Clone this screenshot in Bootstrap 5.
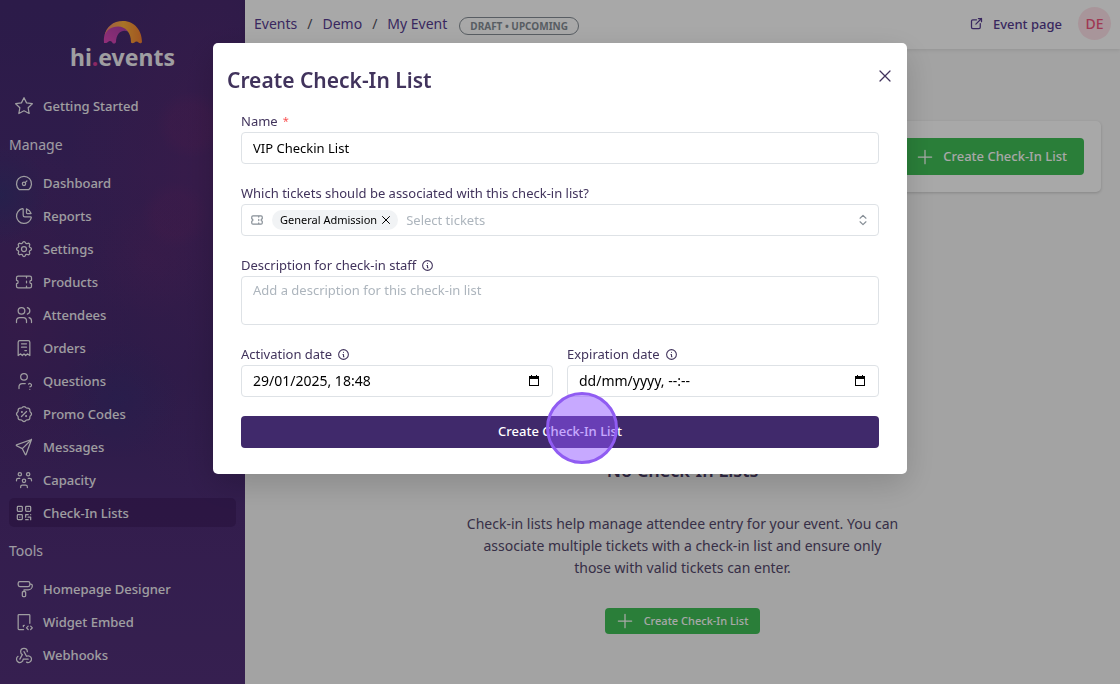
<!DOCTYPE html>
<html lang="en">
<head>
<meta charset="utf-8">
<meta name="viewport" content="width=device-width, initial-scale=1">
<title>Create Check-In List - hi.events</title>
<link href="https://cdn.jsdelivr.net/npm/bootstrap@5.3.0/dist/css/bootstrap.min.css" rel="stylesheet">
<style>
  body { font-family: "Noto Sans", "Open Sans", sans-serif; font-size: 13px; line-height: 20px; background: #f7f7f7; color: #54486c; }
  svg.ti { width: 20px; height: 20px; fill: none; stroke: currentColor; stroke-width: 1.5; stroke-linecap: round; stroke-linejoin: round; flex: none; }

  .side-panel {
    width: 245px; padding: 20px 9px 0; color: #fff;
    background:
      radial-gradient(circle at 190px 125px, rgba(130,40,110,.15) 0 20px, transparent 34px),
      radial-gradient(circle at 175px 215px, rgba(130,40,110,.13) 0 20px, transparent 34px),
      radial-gradient(circle at 150px 260px, rgba(120,40,110,.16), transparent 60px),
      radial-gradient(circle at 0 195px, rgba(35,60,120,.4), transparent 50px),
      radial-gradient(circle at 120px 400px, rgba(50,50,120,.35), transparent 60px),
      radial-gradient(ellipse at 200px 170px, rgba(110,40,110,.3), transparent 130px),
      radial-gradient(ellipse at 20px 320px, rgba(105,38,110,.3), transparent 110px),
      linear-gradient(180deg, #432a70 0%, #482b72 25%, #432a6f 55%, #4e2d76 75%, #52307a 100%);
  }
  .brand-word { font-size: 23px; line-height: 26px; font-weight: 700; opacity: .93; }
  .brand-word span { color: #e0409c; }
  .brand-block { margin-bottom: 21px; }
  .side-link { height: 29px; margin-bottom: 4px; padding: 0 5px; gap: 9px; border-radius: 5px; color: #fff; text-decoration: none; font-weight: 500; opacity: .93; }
  .side-link.active { background: rgba(50,15,75,.35); color: #fff; }
  .side-title { font-size: 14px; line-height: 20px; padding: 5px 0; margin: 9px 0 8px; color: #f1ecf7; }
  .side-title.first { margin-top: 10px; }

  .top-bar { height: 49px; padding: 0 9px 2px; background: #fff; box-shadow: 0 1px 4px rgba(0,0,0,.1); }
  .crumb-row { gap: 12px; }
  .crumbs { --bs-breadcrumb-divider-color: #55505c; font-size: 14px; }
  .crumbs a, .page-link-out { color: #573c91; text-decoration: none; }
  .page-link-out { font-weight: 500; gap: 9px; }
  .page-link-out svg.ti { width: 15px; height: 15px; stroke-width: 2; }
  .crumbs .breadcrumb-item + .breadcrumb-item { padding-left: 10px; }
  .crumbs .breadcrumb-item + .breadcrumb-item::before { padding-right: 10px; }
  .status-pill { font-size: 10px; line-height: 16px; font-weight: 700; padding: 0 10px; color: #868e96; border: 1px solid #868e96; }
  .user-dot { width: 33px; height: 33px; font-size: 14px; font-weight: 500; color: #f2557f; background: #ffe3ea; border: 0; }

  .work-area { padding: 72px 19px 0; }
  .tool-card { padding: 17px; background: #fff; border-radius: 5px; box-shadow: 0 1px 3px rgba(0,0,0,.18); }
  .btn-green { --bs-btn-color: #fff; --bs-btn-bg: #40c057; --bs-btn-hover-bg: #37b24d; --bs-btn-hover-color: #fff; --bs-btn-border-width: 0; --bs-btn-border-radius: 4px; --bs-btn-font-weight: 500; }
  .btn-lg-create { height: 37px; padding: 0 17px 0 12px; gap: 8px; font-size: 13px; }
  .btn-sm-create { height: 26px; padding: 0 12px 0 10px; gap: 9px; font-size: 11px; }
  .empty-state { padding-top: 265px; font-size: 14px; line-height: 22px; }
  .empty-state h2 { font-size: 18px; line-height: 26px; font-weight: 600; margin-bottom: 30px; color: #4a3d66; }
  .empty-state p { max-width: 436px; margin-bottom: 29px; }

  .modal-backdrop.show { --bs-backdrop-opacity: .34; }
  .create-dialog { max-width: 694px; margin: 43px auto; }
  .create-dialog .modal-content { border: 0; border-radius: 5px; padding: 22px 14px 26px; box-shadow: 0 10px 32px rgba(0,0,0,.16); color: #41335c; }
  .create-dialog .modal-title { font-size: 21px; line-height: 30px; font-weight: 600; }
  .close-x { width: 22px; height: 22px; color: #3f4550; margin-right: -3px; }
  .fields { padding: 16px 14px 0; }
  .field-block { margin-bottom: 19px; }
  .field-block label { display: flex; align-items: center; gap: 5px; margin-bottom: 1px; line-height: 20px; }
  .field-block label svg.ti { width: 13px; height: 13px; stroke-width: 2; }
  .star-req { color: #fa5252; font-size: 11px; }
  .box { width: 100%; min-height: 32px; padding: 0 11px; font-size: 13px; line-height: 20px; color: #000; background: #fff; border: 1px solid #dee2e6; border-radius: 4px; box-shadow: none; }
  .box::placeholder { color: #adb5bd; opacity: 1; }
  textarea.box { display: block; height: 49px; padding: 3px 11px; resize: none; }
  .tick-svg { color: #868e96; }
  .pick-box { padding: 0 8px; }
  .pick-box svg.tick-svg { width: 14px; height: 14px; stroke-width: 2; }
  .ticket-tag { height: 20px; padding: 0 6px 0 8px; gap: 3px; border-radius: 10px; font-size: 11px; color: #000; background: #f1f3f5; }
  .ticket-tag svg.ti { width: 12px; height: 12px; stroke-width: 2; }
  .bare-input { border: 0; outline: 0; min-width: 0; }
  .bare-input::placeholder { color: #adb5bd; }
  .date-box { padding-right: 9px; }
  .date-box .bare-input { font-size: 14px; color: #000; }
  .date-box .bare-input::placeholder { color: #000; opacity: 1; }
  .bare-btn { border: 0; background: none; padding: 0; display: flex; color: inherit; }
  .submit-btn { --bs-btn-color: #fff; --bs-btn-bg: #40296b; --bs-btn-hover-bg: #352158; --bs-btn-hover-color: #fff; --bs-btn-border-width: 0; --bs-btn-border-radius: 4px; --bs-btn-font-size: 13px; height: 32px; padding: 0; font-weight: 500; }
  .click-ring { position: absolute; left: calc(50% - 14px); top: -24px; width: 72px; height: 72px; border-radius: 50%; border: 3px solid #905cf2; background: rgba(143,83,255,.5); pointer-events: none; }
</style>
</head>
<body>
<div class="d-flex min-vh-100">
  <aside class="side-panel flex-shrink-0">
    <div class="brand-block d-flex flex-column align-items-center">
      <svg width="40" height="24" viewBox="0 0 40 24" aria-hidden="true">
        <defs>
          <linearGradient id="gOrange" x1="0" y1="0" x2="1" y2="0"><stop offset="0" stop-color="#ee8a70"/><stop offset=".5" stop-color="#ffb03c"/><stop offset="1" stop-color="#f58232"/></linearGradient>
          <linearGradient id="gPink" x1="0" y1="1" x2="1" y2="0"><stop offset="0" stop-color="#e048b8"/><stop offset="1" stop-color="#a83fa6"/></linearGradient>
        </defs>
        <path fill="url(#gPink)" d="M1 23C0 12 5 6 14 5c7 0 11 3 13 8-5-5-14-2-14 9-1 2-3 2-4 0-1-1.500-3-1.500-4 0-1 1-2 1-4 1z"/>
        <path fill="url(#gOrange)" d="M1.500 16C3 7 10 1 20 1c12 0 19 10 19 21 0 1-2 2-3.500.500-1-1.500-3-1.500-4 0-1.500 1-3 1-3.500-.5C28 13 23 6.500 15 6.500 8 6.500 3.500 10 1.500 16z"/>
      </svg>
      <div class="brand-word">hi<span>.</span>events</div>
    </div>
    <nav aria-label="Event">
      <a class="side-link d-flex align-items-center" href="#"><svg class="ti" viewBox="0 0 24 24"><path d="M12 17.750l-6.172 3.245l1.179-6.873l-5-4.867l6.900-1l3.086-6.253l3.086 6.253l6.900 1l-5 4.867l1.179 6.873z"/></svg>Getting Started</a>
      <div class="side-title first">Manage</div>
      <a class="side-link d-flex align-items-center" href="#"><svg class="ti" viewBox="0 0 24 24"><path d="M10 13a2 2 0 1 0 4 0a2 2 0 1 0-4 0M13.450 11.550l2.050-2.050M6.400 20a9 9 0 1 1 11.200 0z"/></svg>Dashboard</a>
      <a class="side-link d-flex align-items-center" href="#"><svg class="ti" viewBox="0 0 24 24"><path d="M10 3.200a9 9 0 1 0 10.800 10.800a1 1 0 0 0-1-1h-6.800a2 2 0 0 1-2-2v-7a.9.9 0 0 0-1-.8M15 3.500a9 9 0 0 1 5.500 5.500h-4.500a1 1 0 0 1-1-1v-4.500"/></svg>Reports</a>
      <a class="side-link d-flex align-items-center" href="#"><svg class="ti" viewBox="0 0 24 24"><path d="M10.325 4.317c.426-1.756 2.924-1.756 3.350 0a1.724 1.724 0 0 0 2.573 1.066c1.543-.94 3.310.826 2.370 2.370a1.724 1.724 0 0 0 1.065 2.572c1.756.426 1.756 2.924 0 3.350a1.724 1.724 0 0 0-1.066 2.573c.94 1.543-.826 3.310-2.370 2.370a1.724 1.724 0 0 0-2.572 1.065c-.426 1.756-2.924 1.756-3.350 0a1.724 1.724 0 0 0-2.573-1.066c-1.543.94-3.310-.826-2.370-2.370a1.724 1.724 0 0 0-1.065-2.572c-1.756-.426-1.756-2.924 0-3.350a1.724 1.724 0 0 0 1.066-2.573c-.94-1.543.826-3.310 2.370-2.370c1 .608 2.296.07 2.572-1.065zM9 12a3 3 0 1 0 6 0a3 3 0 0 0-6 0"/></svg>Settings</a>
      <a class="side-link d-flex align-items-center" href="#"><svg class="ti" viewBox="0 0 24 24"><path d="M15 5v2M15 11v2M15 17v2M5 5h14a2 2 0 0 1 2 2v3a2 2 0 0 0 0 4v3a2 2 0 0 1-2 2h-14a2 2 0 0 1-2-2v-3a2 2 0 0 0 0-4v-3a2 2 0 0 1 2-2"/></svg>Products</a>
      <a class="side-link d-flex align-items-center" href="#"><svg class="ti" viewBox="0 0 24 24"><path d="M5 7a4 4 0 1 0 8 0a4 4 0 1 0-8 0M3 21v-2a4 4 0 0 1 4-4h4a4 4 0 0 1 4 4v2M16 3.130a4 4 0 0 1 0 7.750M21 21v-2a4 4 0 0 0-3-3.850"/></svg>Attendees</a>
      <a class="side-link d-flex align-items-center" href="#"><svg class="ti" viewBox="0 0 24 24"><path d="M5 21v-16a2 2 0 0 1 2-2h10a2 2 0 0 1 2 2v16l-3-2l-2 2l-2-2l-2 2l-2-2l-3 2m4-14h6m-6 4h6m-2 4h2"/></svg>Orders</a>
      <a class="side-link d-flex align-items-center" href="#"><svg class="ti" viewBox="0 0 24 24"><path d="M8 7a4 4 0 1 0 8 0a4 4 0 0 0-8 0M6 21v-2a4 4 0 0 1 4-4h3.500M19 22v.01M19 19a2.003 2.003 0 0 0 .914-3.782a1.980 1.980 0 0 0-2.414.483"/></svg>Questions</a>
      <a class="side-link d-flex align-items-center" href="#"><svg class="ti" viewBox="0 0 24 24"><path d="M9 15l6-6M9.500 9a.5.5 0 1 0 0 1a.5.5 0 0 0 0-1M14.500 14a.5.5 0 1 0 0 1a.5.5 0 0 0 0-1M5 7.200a2.200 2.200 0 0 1 2.200-2.200h1a2.200 2.200 0 0 0 1.550-.64l.7-.7a2.200 2.200 0 0 1 3.120 0l.7.7a2.200 2.200 0 0 0 1.550.64h1a2.200 2.200 0 0 1 2.200 2.200v1a2.200 2.200 0 0 0 .64 1.550l.7.7a2.200 2.200 0 0 1 0 3.120l-.7.7a2.200 2.200 0 0 0-.64 1.550v1a2.200 2.200 0 0 1-2.200 2.200h-1a2.200 2.200 0 0 0-1.550.64l-.7.7a2.200 2.200 0 0 1-3.120 0l-.7-.7a2.200 2.200 0 0 0-1.550-.64h-1a2.200 2.200 0 0 1-2.200-2.200v-1a2.200 2.200 0 0 0-.64-1.550l-.7-.7a2.200 2.200 0 0 1 0-3.120l.7-.7a2.200 2.200 0 0 0 .64-1.550v-1"/></svg>Promo Codes</a>
      <a class="side-link d-flex align-items-center" href="#"><svg class="ti" viewBox="0 0 24 24"><path d="M10 14l11-11M21 3l-6.500 18a.55.55 0 0 1-1 0l-3.500-7l-7-3.500a.55.55 0 0 1 0-1l18-6.500"/></svg>Messages</a>
      <a class="side-link d-flex align-items-center" href="#"><svg class="ti" viewBox="0 0 24 24"><path d="M10 13a2 2 0 1 0 4 0a2 2 0 0 0-4 0M8 21v-1a2 2 0 0 1 2-2h4a2 2 0 0 1 2 2v1M15 5a2 2 0 1 0 4 0a2 2 0 0 0-4 0M17 10h2a2 2 0 0 1 2 2v1M5 5a2 2 0 1 0 4 0a2 2 0 0 0-4 0M3 13v-1a2 2 0 0 1 2-2h2"/></svg>Capacity</a>
      <a class="side-link active d-flex align-items-center" href="#" aria-current="page"><svg class="ti" viewBox="0 0 24 24"><path d="M4 5a1 1 0 0 1 1-1h4a1 1 0 0 1 1 1v4a1 1 0 0 1-1 1h-4a1 1 0 0 1-1-1zM7 17v.01M14 5a1 1 0 0 1 1-1h4a1 1 0 0 1 1 1v4a1 1 0 0 1-1 1h-4a1 1 0 0 1-1-1zM7 7v.01M4 15a1 1 0 0 1 1-1h4a1 1 0 0 1 1 1v4a1 1 0 0 1-1 1h-4a1 1 0 0 1-1-1zM17 7v.01M14 14h3M20 14v.01M14 14v3M14 20h3M17 17h3M20 17v3"/></svg>Check-In Lists</a>
      <div class="side-title">Tools</div>
      <a class="side-link d-flex align-items-center" href="#"><svg class="ti" viewBox="0 0 24 24"><path d="M5 5a2 2 0 0 1 2-2h10a2 2 0 0 1 2 2v2a2 2 0 0 1-2 2h-10a2 2 0 0 1-2-2zM19 6h1a2 2 0 0 1 2 2a5 5 0 0 1-5 5h-5v2M10 16a1 1 0 0 1 1-1h2a1 1 0 0 1 1 1v4a1 1 0 0 1-1 1h-2a1 1 0 0 1-1-1z"/></svg>Homepage Designer</a>
      <a class="side-link d-flex align-items-center" href="#"><svg class="ti" viewBox="0 0 24 24"><path d="M11.500 21h-5.500a1 1 0 0 1-1-1v-16a1 1 0 0 1 1-1h12a1 1 0 0 1 1 1v9.500M20 21l2-2l-2-2M17 17l-2 2l2 2M12.300 16a1 1 0 0 0-1 1.600"/></svg>Widget Embed</a>
      <a class="side-link d-flex align-items-center" href="#"><svg class="ti" viewBox="0 0 24 24"><path d="M4.876 13.610a4 4 0 1 0 6.124 3.390h6M15.066 20.502a4 4 0 1 0 1.934-7.502c-.706 0-1.424.179-2 .5l-3-5.500M16 8a4 4 0 1 0-8 0c0 1.506.77 2.818 2 3.500l-3 5.500"/></svg>Webhooks</a>
    </nav>
  </aside>

  <div class="flex-grow-1">
    <header class="top-bar d-flex align-items-center justify-content-between">
      <div class="crumb-row d-flex align-items-center">
        <nav aria-label="breadcrumb">
          <ol class="breadcrumb crumbs mb-0">
            <li class="breadcrumb-item"><a href="#">Events</a></li>
            <li class="breadcrumb-item"><a href="#">Demo</a></li>
            <li class="breadcrumb-item"><a href="#">My Event</a></li>
          </ol>
        </nav>
        <span class="status-pill rounded-pill mt-1">DRAFT • UPCOMING</span>
      </div>
      <div class="d-flex align-items-center gap-3">
        <a class="page-link-out d-flex align-items-center" href="#"><svg class="ti" viewBox="0 0 24 24"><path d="M12 6h-6a2 2 0 0 0-2 2v10a2 2 0 0 0 2 2h10a2 2 0 0 0 2-2v-6M11 13l9-9M15 4h5v5"/></svg>Event page</a>
        <button type="button" class="user-dot rounded-circle p-0">DE</button>
      </div>
    </header>
    <main class="work-area">
      <div class="tool-card d-flex justify-content-end">
        <button type="button" class="btn btn-green btn-lg-create d-flex align-items-center"><svg class="ti" viewBox="0 0 24 24"><path d="M12 4v16M4 12h16"/></svg>Create Check-In List</button>
      </div>
      <section class="empty-state d-flex flex-column align-items-center text-center">
        <h2>No Check-In Lists</h2>
        <p>Check-in lists help manage attendee entry for your event. You can associate multiple tickets with a check-in list and ensure only those with valid tickets can enter.</p>
        <button type="button" class="btn btn-green btn-sm-create d-flex align-items-center"><svg class="ti" viewBox="0 0 24 24"><path d="M12 4v16M4 12h16"/></svg>Create Check-In List</button>
      </section>
    </main>
  </div>
</div>

<div class="modal-backdrop show"></div>
<div class="modal show d-block" tabindex="-1" role="dialog" aria-modal="true" aria-labelledby="dlgTitle">
  <div class="modal-dialog create-dialog">
    <form class="modal-content">
      <div class="d-flex justify-content-between align-items-start">
        <h1 class="modal-title" id="dlgTitle">Create Check-In List</h1>
        <button type="button" class="bare-btn close-x align-items-center justify-content-center" aria-label="Close"><svg class="ti" viewBox="0 0 24 24"><path d="M6 6l12 12M18 6l-12 12"/></svg></button>
      </div>
      <div class="fields">
        <div class="field-block">
          <label for="listName">Name <span class="star-req">*</span></label>
          <input id="listName" class="box" type="text" value="VIP Checkin List">
        </div>
        <div class="field-block">
          <label for="tickets">Which tickets should be associated with this check-in list?</label>
          <div class="box pick-box d-flex align-items-center">
            <svg class="ti tick-svg" viewBox="0 0 24 24"><path d="M15 5v2M15 11v2M15 17v2M5 5h14a2 2 0 0 1 2 2v3a2 2 0 0 0 0 4v3a2 2 0 0 1-2 2h-14a2 2 0 0 1-2-2v-3a2 2 0 0 0 0-4v-3a2 2 0 0 1 2-2"/></svg>
            <span class="ticket-tag d-flex align-items-center mx-2">General Admission <button type="button" class="bare-btn" aria-label="Remove General Admission"><svg class="ti" viewBox="0 0 24 24"><path d="M5 5l14 14M19 5l-14 14"/></svg></button></span>
            <input id="tickets" class="bare-input flex-grow-1 p-0" type="text" placeholder="Select tickets">
            <svg class="ti tick-svg" viewBox="0 0 24 24"><path d="M7 9l5-5l5 5M7 15l5 5l5-5"/></svg>
          </div>
        </div>
        <div class="field-block">
          <label for="descr">Description for check-in staff <svg class="ti" viewBox="0 0 24 24"><path d="M3 12a9 9 0 1 0 18 0a9 9 0 0 0-18 0M12 8h.01M11 12h1v4h1"/></svg></label>
          <textarea id="descr" class="box" placeholder="Add a description for this check-in list"></textarea>
        </div>
        <div class="row" style="--bs-gutter-x:14px">
          <div class="col-6 field-block">
            <label for="actDate">Activation date <svg class="ti" viewBox="0 0 24 24"><path d="M3 12a9 9 0 1 0 18 0a9 9 0 0 0-18 0M12 8h.01M11 12h1v4h1"/></svg></label>
            <div class="box date-box d-flex align-items-center">
              <input id="actDate" class="bare-input flex-grow-1 p-0" type="text" value="29/01/2025, 18:48">
              <button type="button" class="bare-btn px-1" aria-label="Pick activation date"><svg width="10" height="12" viewBox="0 0 10 12"><path d="M2 0h1v1h4V0h1v1h2v10H0V1h2zM1 4v6h8V4z" fill-rule="evenodd"/></svg></button>
            </div>
          </div>
          <div class="col-6 field-block">
            <label for="expDate">Expiration date <svg class="ti" viewBox="0 0 24 24"><path d="M3 12a9 9 0 1 0 18 0a9 9 0 0 0-18 0M12 8h.01M11 12h1v4h1"/></svg></label>
            <div class="box date-box d-flex align-items-center">
              <input id="expDate" class="bare-input flex-grow-1 p-0" type="text" placeholder="dd/mm/yyyy, --:--">
              <button type="button" class="bare-btn px-1" aria-label="Pick expiration date"><svg width="10" height="12" viewBox="0 0 10 12"><path d="M2 0h1v1h4V0h1v1h2v10H0V1h2zM1 4v6h8V4z" fill-rule="evenodd"/></svg></button>
            </div>
          </div>
        </div>
        <div class="position-relative">
          <button type="submit" class="btn submit-btn w-100">Create Check-In List</button>
          <span class="click-ring"></span>
        </div>
      </div>
    </form>
  </div>
</div>
<script src="https://cdn.jsdelivr.net/npm/bootstrap@5.3.0/dist/js/bootstrap.bundle.min.js"></script>
</body>
</html>
